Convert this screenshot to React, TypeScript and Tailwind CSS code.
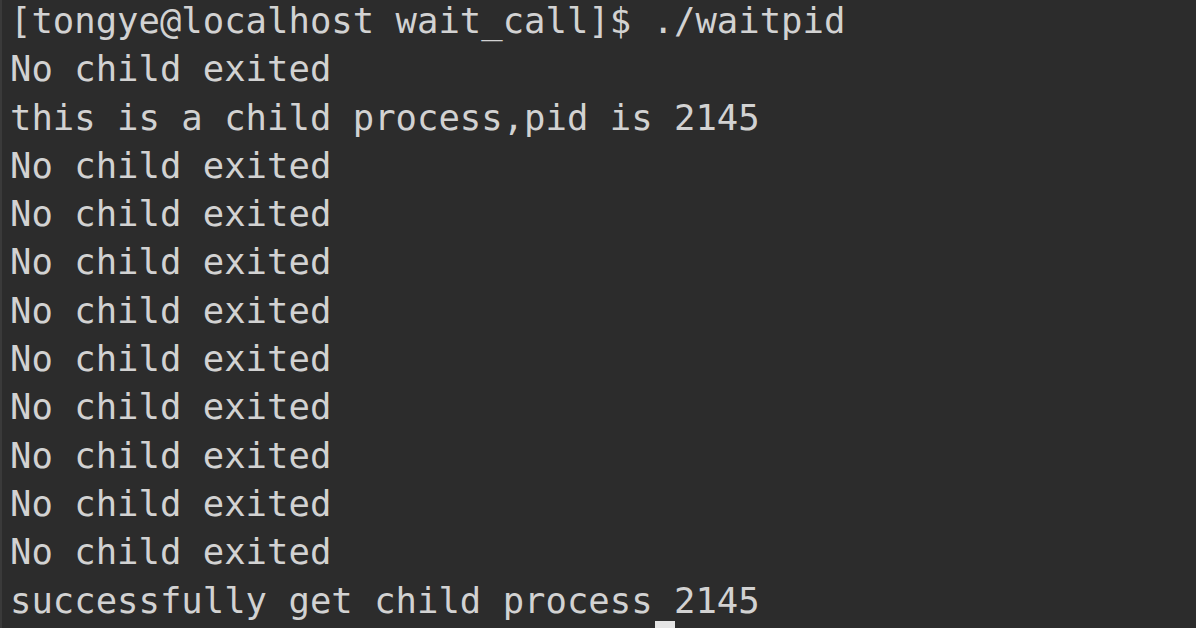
const lines = [
  "[tongye@localhost wait_call]$ ./waitpid",
  "No child exited",
  "this is a child process,pid is 2145",
  "No child exited",
  "No child exited",
  "No child exited",
  "No child exited",
  "No child exited",
  "No child exited",
  "No child exited",
  "No child exited",
  "No child exited",
  "successfully get child process 2145",
];

export default function App() {
  return (
    <div className="relative w-[1196px] h-[628px] overflow-hidden bg-[#2c2c2c] border-l-2 border-[#3a3a3a]">
      <pre
        className="pl-2 -mt-[3px] text-[35.6px] leading-[48.3px] text-[#d2d2d2] whitespace-pre"
        style={{ fontFamily: '"DejaVu Sans Mono", "Liberation Mono", monospace' }}
      >
        {lines.map((line, i) => (
          <div key={i}>{line}</div>
        ))}
      </pre>
      {/* block cursor, cut off by the bottom edge */}
      <span className="absolute left-[653px] top-[621px] w-[20px] h-[10px] bg-[#e4e4e4]" />
    </div>
  );
}
